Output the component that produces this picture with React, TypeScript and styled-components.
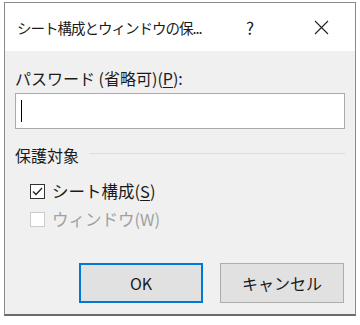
import styled, { createGlobalStyle } from "styled-components";

const GlobalStyle = createGlobalStyle`
  html, body {
    margin: 0;
    padding: 0;
    background: #ffffff;
  }
  body {
    font-family: "Noto Sans CJK JP", "Noto Sans", sans-serif;
  }
`;

const Dialog = styled.div`
  margin: 2px 0 0 4px;
  width: 352px;
  height: 314px;
  box-sizing: border-box;
  border: 1px solid #8a8a8a;
  border-bottom: 2px solid #6a6a6a;
  display: flex;
  flex-direction: column;
  background: #f0f0f0;
`;

const TitleBar = styled.div`
  height: 48px;
  flex: none;
  background: #ffffff;
  display: flex;
  align-items: center;
  padding: 0 11px 0 12px;
  color: #1a1a1a;
`;

const Title = styled.div`
  font-size: 14.5px;
  width: 218px;
  white-space: nowrap;
  letter-spacing: -1px;
`;

const TitleButton = styled.div<{ $w: number }>`
  width: ${(p) => p.$w}px;
  display: flex;
  justify-content: center;
  align-items: center;
  font-size: 17px;
  color: #222;
  &:last-child {
    margin-left: auto;
  }
`;

const Body = styled.div`
  flex: 1;
  display: flex;
  flex-direction: column;
  padding: 0 10px 0 10px;
`;

const Label = styled.div`
  margin-top: 15px;
  height: 24px;
  line-height: 24px;
  font-size: 16px;
  color: #1a1a1a;
  u {
    text-decoration: underline;
    text-underline-offset: 2px;
  }
`;

const Input = styled.div`
  margin-top: 3px;
  height: 36px;
  box-sizing: border-box;
  border: 1px solid #ababab;
  background: #ffffff;
  display: flex;
  align-items: center;
  padding-left: 5px;
`;

const Caret = styled.div`
  width: 1px;
  height: 22px;
  background: #000;
`;

const GroupHeader = styled.div`
  margin-top: 14px;
  display: flex;
  align-items: center;
  gap: 10px;
  font-size: 16px;
  color: #1a1a1a;
  height: 24px;
`;

const Rule = styled.div`
  flex: 1;
  height: 1px;
  background: #dcdcdc;
  margin-top: -3px;
`;

const CheckList = styled.div`
  margin-top: 10px;
  display: flex;
  flex-direction: column;
`;

const CheckRow = styled.div<{ $disabled?: boolean }>`
  display: flex;
  align-items: center;
  gap: 7px;
  height: 28px;
  padding-left: 15px;
  font-size: 16.5px;
  color: ${(p) => (p.$disabled ? "#a0a0a0" : "#1a1a1a")};
  u {
    text-decoration: underline;
    text-underline-offset: 2px;
  }
`;

const Box = styled.div<{ $disabled?: boolean }>`
  width: 15px;
  height: 15px;
  box-sizing: border-box;
  border: 1px solid ${(p) => (p.$disabled ? "#cccccc" : "#333333")};
  background: #ffffff;
  display: flex;
  align-items: center;
  justify-content: center;
`;

const Buttons = styled.div`
  margin-top: 30px;
  display: flex;
  justify-content: flex-end;
  gap: 17px;
  padding-right: 1px;
`;

const Button = styled.div<{ $primary?: boolean }>`
  width: 124px;
  height: 40px;
  box-sizing: border-box;
  background: #e1e1e1;
  border: ${(p) => (p.$primary ? "2px solid #0078d7" : "1px solid #adadad")};
  display: flex;
  align-items: center;
  justify-content: center;
  font-size: 16px;
  color: #1a1a1a;
`;

export default function App() {
  return (
    <>
      <GlobalStyle />
      <Dialog>
        <TitleBar>
          <Title>シート構成とウィンドウの保...</Title>
          <TitleButton $w={30}>?</TitleButton>
          <TitleButton $w={46}>
            <svg width="15" height="15" viewBox="0 0 15 15">
              <path d="M1 1 L14 14 M14 1 L1 14" stroke="#222" strokeWidth="1.1" fill="none" />
            </svg>
          </TitleButton>
        </TitleBar>
        <Body>
          <Label>
            パスワード (省略可)(<u>P</u>):
          </Label>
          <Input>
            <Caret />
          </Input>
          <GroupHeader>
            保護対象
            <Rule />
          </GroupHeader>
          <CheckList>
            <CheckRow>
              <Box>
                <svg width="13" height="13" viewBox="0 0 13 13">
                  <path d="M2 6.5 L5 9.5 L11 3" stroke="#222" strokeWidth="1.3" fill="none" />
                </svg>
              </Box>
              <span>
                シート構成(<u>S</u>)
              </span>
            </CheckRow>
            <CheckRow $disabled>
              <Box $disabled />
              <span>ウィンドウ(W)</span>
            </CheckRow>
          </CheckList>
          <Buttons>
            <Button $primary>OK</Button>
            <Button>キャンセル</Button>
          </Buttons>
        </Body>
      </Dialog>
    </>
  );
}
